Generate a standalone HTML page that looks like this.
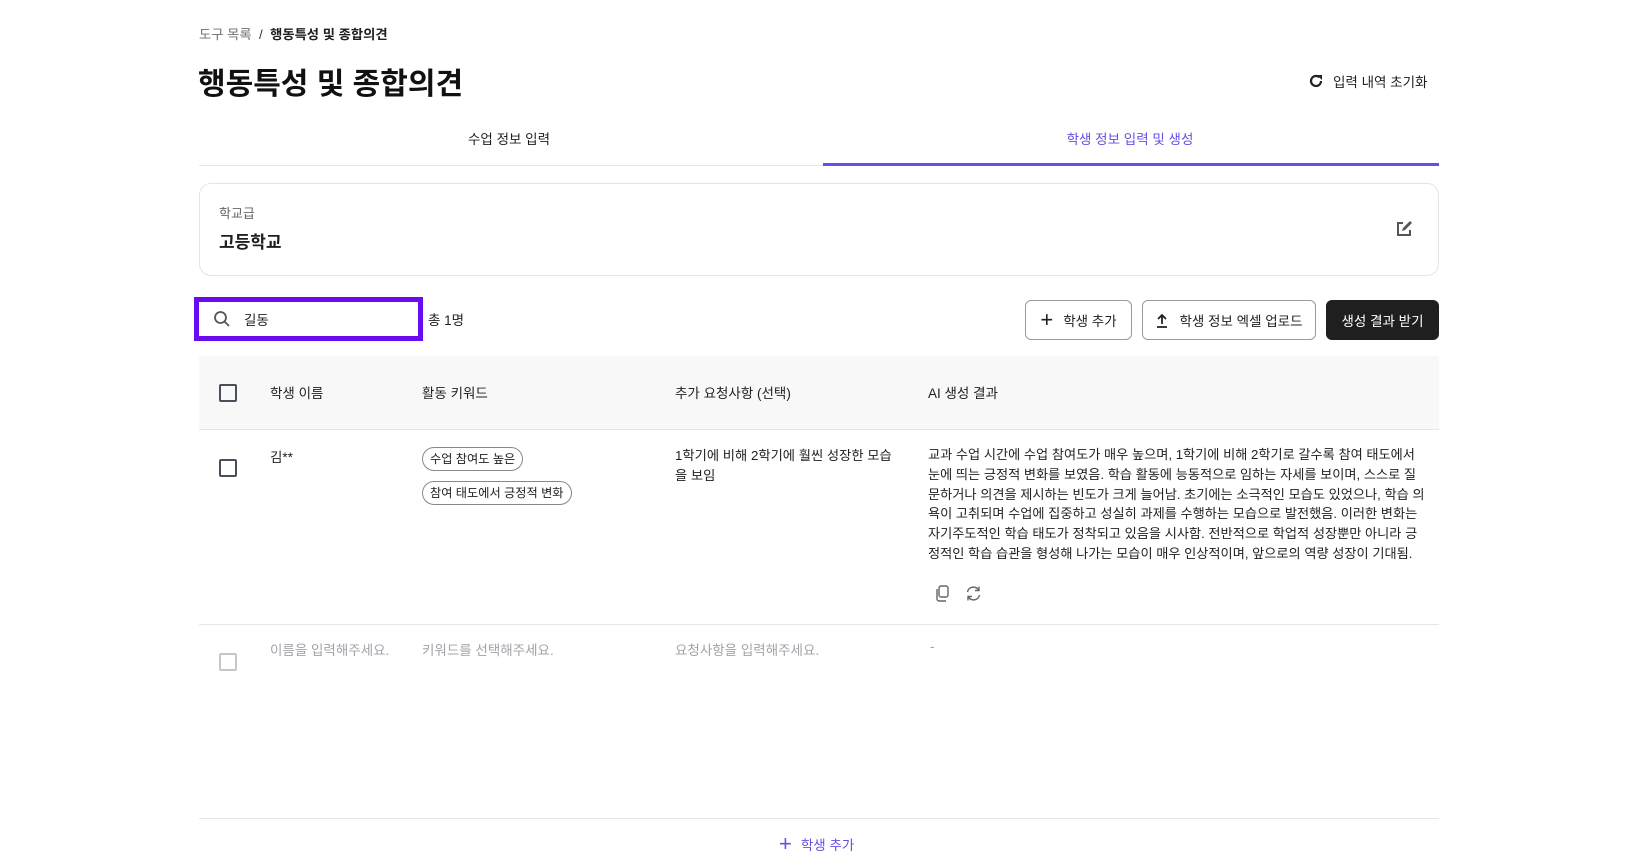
<!DOCTYPE html>
<html><head><meta charset="utf-8"><style>
*{box-sizing:border-box;margin:0;padding:0}
body{width:1634px;height:865px;background:#fff;font-family:"Liberation Sans","Noto Sans CJK KR",sans-serif;color:#1f1f1f;position:relative;overflow:hidden}
.a{position:absolute;white-space:nowrap}
.btn{position:absolute;top:300px;height:40px;border:1px solid #9a9a9a;border-radius:6px;display:flex;align-items:center;justify-content:center;font-size:13.5px;gap:10px;background:#fff}
.cb{position:absolute;width:18px;height:18px;border:2px solid #4a5058;border-radius:2px}
.tag{display:inline-block;border:1px solid #888;border-radius:12px;font-size:12.2px;padding:2px 7px;line-height:18px}
</style></head><body>
<div class="a" style="left:199px;top:24px;font-size:13.3px;color:#6b6f75">도구 목록 &nbsp;<span style="color:#333">/</span>&nbsp; <b style="color:#1f1f1f">행동특성 및 종합의견</b></div>
<div class="a" style="left:198px;top:59px;font-size:30px;font-weight:bold;color:#111">행동특성 및 종합의견</div>
<div class="a" style="left:1308px;top:71px;font-size:13.5px;display:flex;align-items:center;gap:9px">
<svg width="16" height="16" viewBox="0 0 16 16"><path d="M13 8a5 5 0 1 1-1.5-3.6" fill="none" stroke="#222" stroke-width="2.2"/><path d="M9 2h5v5z" fill="#222"/></svg>입력 내역 초기화</div>
<div class="a" style="left:199px;top:128px;width:620px;text-align:center;font-size:13.5px">수업 정보 입력</div>
<div class="a" style="left:820px;top:128px;width:620px;text-align:center;font-size:13.5px;color:#6a4de6">학생 정보 입력 및 생성</div>
<div class="a" style="left:199px;top:165px;width:1240px;height:1px;background:#e4e6ea"></div>
<div class="a" style="left:823px;top:163px;width:616px;height:3px;background:#6a4de6"></div>
<div class="a" style="left:199px;top:183px;width:1240px;height:93px;border:1px solid #e2e4e8;border-radius:12px"></div>
<div class="a" style="left:219px;top:203px;font-size:13px;color:#666">학교급</div>
<div class="a" style="left:219px;top:228px;font-size:17px;font-weight:bold">고등학교</div>
<svg class="a" style="left:1395px;top:220px" width="18" height="18" viewBox="0 0 18 18"><path d="M8 3H3v12h12v-5" fill="none" stroke="#555" stroke-width="2"/><path d="M7 11l1-3 7-7 2 2-7 7z" fill="#555"/></svg>
<div class="a" style="left:194px;top:297px;width:229px;height:44px;border:5px solid #6a0cf0"></div>
<svg class="a" style="left:213px;top:310px" width="18" height="18" viewBox="0 0 18 18"><circle cx="7.5" cy="7.5" r="5.5" fill="none" stroke="#555" stroke-width="1.8"/><path d="M11.5 11.5l4.5 4.5" stroke="#555" stroke-width="1.8"/></svg>
<div class="a" style="left:244px;top:309px;font-size:13.5px">길동</div>
<div class="a" style="left:428px;top:309px;font-size:13.5px">총 1명</div>
<div class="btn" style="left:1025px;width:107px"><span style="font-size:22px;font-weight:300;line-height:1">+</span>학생 추가</div>
<div class="btn" style="left:1142px;width:174px"><svg width="14" height="16" viewBox="0 0 14 16"><path d="M7 12V3M3 7l4-4 4 4M2 15h10" fill="none" stroke="#222" stroke-width="1.8"/></svg>학생 정보 엑셀 업로드</div>
<div class="btn" style="left:1326px;width:113px;background:#1f1f1f;color:#fff;border-color:#1f1f1f">생성 결과 받기</div>
<div class="a" style="left:199px;top:356px;width:1240px;height:74px;background:#f8f8f8;border-bottom:1px solid #e4e6ea"></div>
<div class="cb" style="left:219px;top:384px"></div>
<div class="a" style="left:270px;top:382px;font-size:13.5px">학생 이름</div>
<div class="a" style="left:422px;top:382px;font-size:13.5px">활동 키워드</div>
<div class="a" style="left:675px;top:382px;font-size:13.5px">추가 요청사항 (선택)</div>
<div class="a" style="left:928px;top:382px;font-size:13.5px">AI 생성 결과</div>
<div class="cb" style="left:219px;top:459px"></div>
<div class="a" style="left:270px;top:446px;font-size:13.5px">김**</div>
<div class="a" style="left:422px;top:447px"><span class="tag">수업 참여도 높은</span></div>
<div class="a" style="left:422px;top:481px"><span class="tag">참여 태도에서 긍정적 변화</span></div>
<div class="a" style="left:675px;top:446px;font-size:13.3px;line-height:19.8px">1학기에 비해 2학기에 훨씬 성장한 모습<br>을 보임</div>
<div class="a" style="left:928px;top:445px;font-size:13.2px;line-height:19.8px">교과 수업 시간에 수업 참여도가 매우 높으며, 1학기에 비해 2학기로 갈수록 참여 태도에서<br>눈에 띄는 긍정적 변화를 보였음. 학습 활동에 능동적으로 임하는 자세를 보이며, 스스로 질<br>문하거나 의견을 제시하는 빈도가 크게 늘어남. 초기에는 소극적인 모습도 있었으나, 학습 의<br>욕이 고취되며 수업에 집중하고 성실히 과제를 수행하는 모습으로 발전했음. 이러한 변화는<br>자기주도적인 학습 태도가 정착되고 있음을 시사함. 전반적으로 학업적 성장뿐만 아니라 긍<br>정적인 학습 습관을 형성해 나가는 모습이 매우 인상적이며, 앞으로의 역량 성장이 기대됨.</div>
<svg class="a" style="left:934px;top:585px" width="16" height="17" viewBox="0 0 16 17"><rect x="5" y="1" width="9" height="11" rx="2" fill="none" stroke="#666" stroke-width="1.4"/><path d="M3 4v10a2 2 0 0 0 2 2h7" fill="none" stroke="#666" stroke-width="1.4"/></svg>
<svg class="a" style="left:965px;top:585px" width="17" height="17" viewBox="0 0 17 17"><path d="M2.5 7a6 6 0 0 1 11-2M14.5 10a6 6 0 0 1-11 2" fill="none" stroke="#666" stroke-width="1.4"/><path d="M14 1.5v4h-4M3 15.5v-4h4" fill="none" stroke="#666" stroke-width="1.4"/></svg>
<div class="a" style="left:199px;top:624px;width:1240px;height:1px;background:#e4e6ea"></div>
<div class="cb" style="left:219px;top:653px;border-color:#c4c6ca"></div>
<div class="a" style="left:270px;top:639px;font-size:13.5px;color:#a0a3a8">이름을 입력해주세요.</div>
<div class="a" style="left:422px;top:639px;font-size:13.5px;color:#a0a3a8">키워드를 선택해주세요.</div>
<div class="a" style="left:675px;top:639px;font-size:13.5px;color:#a0a3a8">요청사항을 입력해주세요.</div>
<div class="a" style="left:930px;top:639px;font-size:13.5px;color:#a0a3a8">-</div>
<div class="a" style="left:199px;top:818px;width:1240px;height:1px;background:#e4e6ea"></div>
<div class="a" style="left:779px;top:833px;font-size:13.5px;color:#6a4de6;display:flex;align-items:center;gap:9px"><span style="font-size:22px;line-height:1;font-weight:300">+</span>학생 추가</div>
</body></html>
